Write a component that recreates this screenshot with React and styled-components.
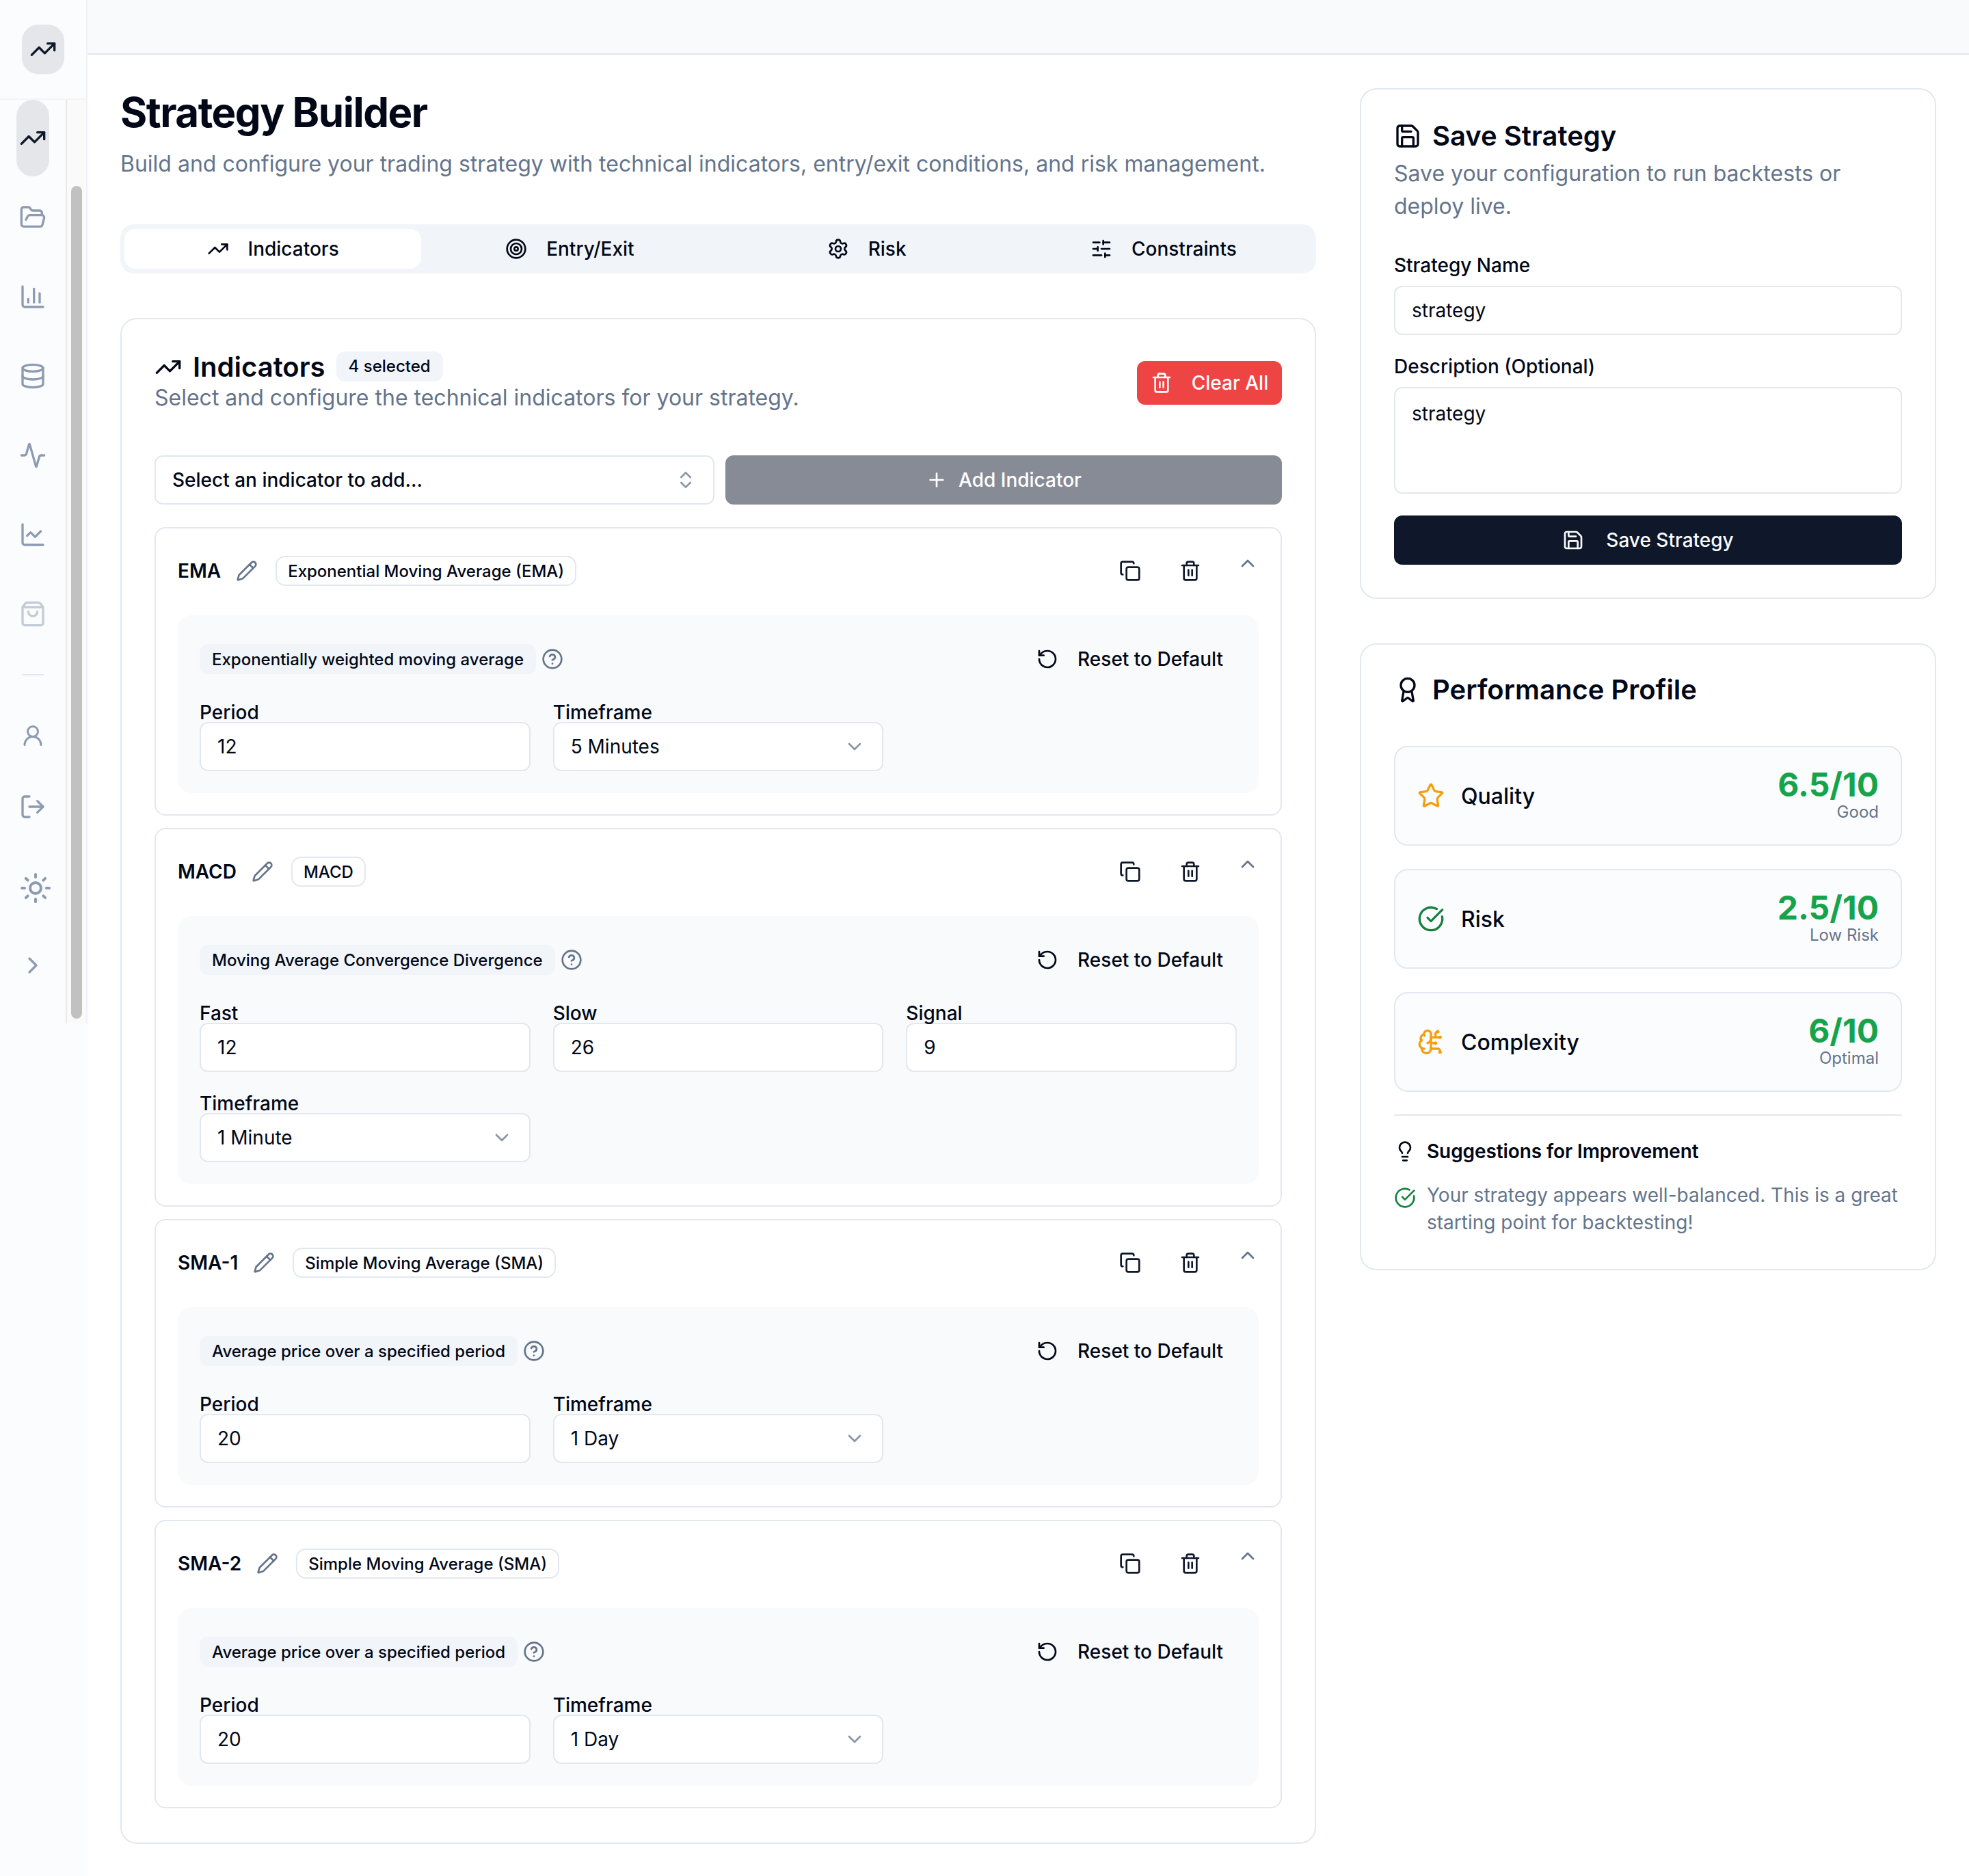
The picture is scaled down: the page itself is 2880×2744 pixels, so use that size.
import React from "react";
import styled, { createGlobalStyle } from "styled-components";
import {
  TrendingUp, FolderOpen, ChartColumn, Database, Activity, ChartLine, ShoppingBag, UserRound, LogOut, Sun, ChevronRight,
  Target, Settings, SlidersHorizontal, Trash2, ChevronsUpDown, Plus, Pencil, Copy, ChevronUp, RotateCcw,
  CircleHelp, ChevronDown, Save, Award, Star, CircleCheckBig, BrainCircuit, Lightbulb,
} from "lucide-react";

const Global = createGlobalStyle`
  * { box-sizing: border-box; }
  html, body { margin: 0; padding: 0; background: #fff; }
  body { font-family: Inter, "Noto Sans", sans-serif; color: #020817; }
  input, textarea, button { font-family: inherit; }
`;

const Page = styled.div`display: flex; width: 2880px; min-height: 2744px; background: #fff;`;
const SideColumn = styled.div`width: 128px; flex: none; background: #fbfcfe;`;
const Sidebar = styled.aside`height: 1497px; display: flex; flex-direction: column; border-right: 2px solid #eef2f7;`;
const Brand = styled.div`height: 146px; flex: none; border-bottom: 2px solid #f1f5f9; padding: 36px 0 0 32px;`;
const BrandMark = styled.div`width: 62px; height: 72px; border-radius: 24px; background: #e4e6e9; display: flex; align-items: center; justify-content: center; color: #0f172a; box-shadow: 0 1px 2px rgba(0,0,0,.04);`;
const NavScroll = styled.div`flex: 1; display: flex; min-height: 0;`;
const NavList = styled.nav`width: 96px; flex: none; display: flex; flex-direction: column; align-items: center;`;
const NavItem = styled.div`
  width: 48px; height: ${p => p.$h || 116}px; flex: none; display: flex; align-items: center; justify-content: center;
  border-radius: 24px; color: ${p => p.$active ? "#0f172a" : "#8c9bb0"};
  background: ${p => p.$active ? "#e4e6e9" : "transparent"};
  opacity: ${p => p.$dim ? .5 : 1};
  padding-left: ${p => p.$nudge || 0}px;
  margin-bottom: ${p => p.$active ? 2 : 0}px;
  svg { flex: none; }
`;
const NavRule = styled.div`width: 32px; height: 2px; background: #e2e8f0; margin: 30px 0 30px; flex: none;`;
const ScrollTrack = styled.div`flex: 1; background: #fafafa; border-left: 2px solid #e8e8e8; padding: 126px 6px 7px 6px; display: flex;`;
const ScrollThumb = styled.div`flex: 1; background: #c1c1c1; border-radius: 8px;`;

const Workspace = styled.div`flex: 1; min-width: 0; display: flex; flex-direction: column;`;
const TopBar = styled.header`height: 80px; flex: none; background: #f8fafc; border-bottom: 2px solid #e2e8f0;`;
const Content = styled.div`display: grid; grid-template-columns: 1749px 843px; gap: 64px; padding: 49px 48px 0;`;
const MainCol = styled.main`min-width: 0;`;
const Title = styled.h1`margin: 0; font-size: 60px; line-height: 70px; font-weight: 700; letter-spacing: -1.5px; color: #020817;`;
const Subtitle = styled.p`margin: 17px 0 0; font-size: 32px; line-height: 48px; color: #64748b;`;

const TabBar = styled.div`margin-top: 64px; height: 72px; background: #f1f5f9; border-radius: 20px; padding: 7px 6px; display: grid; grid-template-columns: repeat(4, 1fr);`;
const Tab = styled.div`
  display: flex; align-items: center; justify-content: center; gap: 28px; font-size: 28px; font-weight: 500; border-radius: 16px;
  background: ${p => p.$active ? "#fff" : "transparent"}; color: #020817;
`;

const Card = styled.section`border: 2px solid #e2e8f0; border-radius: 24px; background: #fff;`;
const IndicatorsCard = styled(Card)`margin-top: 65px; padding: 48px 48px 50px;`;
const CardHead = styled.div`display: flex; justify-content: space-between; align-items: center;`;
const HeadRow = styled.div`display: flex; align-items: center; height: 44px;`;
const HeadTitle = styled.h2`margin: 0 0 0 16px; font-size: 40px; font-weight: 600; line-height: 44px;`;
const CountBadge = styled.span`margin: -3px 0 0 16px; height: 44px; padding: 0 18px; display: inline-flex; align-items: center; background: #f1f5f9; border-radius: 12px; font-size: 24px; font-weight: 500;`;
const HeadSub = styled.p`margin: 0; font-size: 32px; line-height: 46px; color: #64748b;`;
const DangerButton = styled.button`height: 64px; width: 212px; border: 0; border-radius: 12px; background: #ef4444; color: #fff; font-size: 28px; font-weight: 500; display: flex; align-items: center; justify-content: center; gap: 28px; padding: 0;`;

const AddRow = styled.div`margin-top: 61px; display: grid; grid-template-columns: 819px 1fr; gap: 16px;`;
const SelectBox = styled.div`
  height: 72px; background: #fff; border: 2px solid #e2e8f0; border-radius: 12px; display: flex; align-items: center; justify-content: space-between;
  padding: 0 24px; font-size: 28px; color: #020817; font-weight: ${p => p.$w || 400};
  svg { color: #64748b; opacity: .75; flex: none; }
`;
const AddButton = styled.button`height: 72px; border: 0; border-radius: 12px; background: #878b95; color: #fff; font-size: 28px; font-weight: 500; display: flex; align-items: center; justify-content: center; gap: 16px; padding: 0;`;

const IndicatorList = styled.div`margin-top: 33px; display: flex; flex-direction: column; gap: 18px;`;
const IndicatorCard = styled.article`border: 2px solid #e2e8f0; border-radius: 16px; padding: 32px 32px 31px; background: #fff;`;
const IndicatorHead = styled.div`display: flex; align-items: flex-start; height: 60px;`;
const IndicatorInfo = styled.div`flex: 1; display: flex; align-items: center; height: 60px; min-width: 0;`;
const IndicatorName = styled.span`font-size: 28px; font-weight: 600;`;
const EditIcon = styled.span`display: flex; margin-left: 22px; color: #64748b;`;
const TypeBadge = styled.span`margin-left: 26px; height: 44px; padding: 0 16px; display: inline-flex; align-items: center; background: #fff; border: 2px solid #e2e8f0; border-radius: 14px; font-size: 24px; font-weight: 500;`;
const IconAction = styled.div`width: 72px; height: 60px; display: flex; align-items: center; justify-content: center; color: #0f172a; margin-left: 16px;`;
const Collapse = styled.div`width: 32px; height: 38px; display: flex; align-items: center; justify-content: center; color: #64748b; margin-left: 32px;`;

const Panel = styled.div`margin-top: 35px; background: #f8fafc; border-radius: 20px; padding: 32px;`;
const PanelTop = styled.div`display: flex; align-items: center; justify-content: space-between; height: 64px;`;
const HintWrap = styled.div`display: flex; align-items: center; gap: 8px; color: #64748b;`;
const HintChip = styled.span`height: 44px; padding: 0 18px; display: inline-flex; align-items: center; background: #f1f5f9; border-radius: 12px; font-size: 24px; font-weight: 500; color: #020817;`;
const ResetButton = styled.div`display: flex; align-items: center; gap: 28px; font-size: 28px; font-weight: 500; padding-right: 20px; color: #020817;`;
const FieldGrid = styled.div`margin-top: 32px; display: grid; grid-template-columns: repeat(3, 1fr); gap: 32px 33px;`;
const FieldLabel = styled.label`display: block; font-size: 28px; font-weight: 500; line-height: 28px;`;
const TextInput = styled.input`
  display: block; width: 100%; height: 72px; border: 2px solid #e2e8f0; border-radius: 12px; background: #fff; padding: 0 24px;
  font-size: 28px; color: #020817; outline: none;
`;

const SideCol = styled.aside`display: flex; flex-direction: column; gap: 65px;`;
const SaveCard = styled(Card)`padding: 48px;`;
const SideTitle = styled.h2`margin: 0; display: flex; align-items: center; gap: 16px; font-size: 40px; line-height: 40px; font-weight: 600;`;
const SideSub = styled.p`margin: 11px 0 0; font-size: 32px; line-height: 48px; color: #64748b;`;
const NameLabel = styled(FieldLabel)`margin-top: ${p => p.$mt}px; margin-bottom: 16px;`;
const DescArea = styled.textarea`
  display: block; width: 100%; height: 156px; resize: none; border: 2px solid #e2e8f0; border-radius: 12px; background: #fff; padding: 17px 24px;
  font-size: 28px; line-height: 40px; color: #020817; outline: none;
`;
const PrimaryButton = styled.button`margin-top: 32px; width: 100%; height: 72px; border: 0; border-radius: 12px; background: #0f172a; color: #f8fafc; font-size: 28px; font-weight: 500; display: flex; align-items: center; justify-content: center; gap: 32px; padding: 0;`;

const ProfileCard = styled(Card)`padding: 50px 48px 48px;`;
const ProfileTitle = styled(SideTitle)`height: 32px; margin-bottom: 66px;`;
const MetricList = styled.div`display: flex; flex-direction: column; gap: 34px;`;
const Metric = styled.div`height: 146px; border: 2px solid #e2e8f0; border-radius: 20px; background: #fbfcfe; padding: 0 32px; display: flex; align-items: center; justify-content: space-between;`;
const MetricName = styled.div`display: flex; align-items: center; gap: 24px; font-size: 32px; font-weight: 500; svg { color: ${p => p.$tone}; }`;
const MetricValue = styled.div`text-align: right;`;
const Score = styled.div`font-size: 48px; line-height: 48px; font-weight: 700; color: #16a34a;`;
const Verdict = styled.div`font-size: 24px; line-height: 32px; color: #64748b;`;
const Divider = styled.hr`border: 0; height: 2px; background: #e2e8f0; margin: 33px 0 0;`;
const SuggestHead = styled.div`margin-top: 36px; display: flex; align-items: center; gap: 16px; font-size: 28px; line-height: 28px; font-weight: 600; letter-spacing: -.1px;`;
const SuggestRow = styled.div`margin-top: 28px; display: flex; gap: 16px; font-size: 28px; line-height: 40px; color: #64748b; svg { color: #15803d; flex: none; margin-top: 8px; }`;

const indicators = [
  { name: "EMA", type: "Exponential Moving Average (EMA)", hint: "Exponentially weighted moving average",
    fields: [["Period", "12"], ["Timeframe", "5 Minutes", true]] },
  { name: "MACD", type: "MACD", hint: "Moving Average Convergence Divergence",
    fields: [["Fast", "12"], ["Slow", "26"], ["Signal", "9"], ["Timeframe", "1 Minute", true]] },
  { name: "SMA-1", type: "Simple Moving Average (SMA)", hint: "Average price over a specified period",
    fields: [["Period", "20"], ["Timeframe", "1 Day", true]] },
  { name: "SMA-2", type: "Simple Moving Average (SMA)", hint: "Average price over a specified period",
    fields: [["Period", "20"], ["Timeframe", "1 Day", true]] },
];

const tabs = [
  ["Indicators", TrendingUp, true],
  ["Entry/Exit", Target],
  ["Risk", Settings],
  ["Constraints", SlidersHorizontal],
];

const metrics = [
  ["Quality", Star, "#f59e0b", "6.5/10", "Good"],
  ["Risk", CircleCheckBig, "#15803d", "2.5/10", "Low Risk"],
  ["Complexity", BrainCircuit, "#f59e0b", "6/10", "Optimal"],
];

function Indicator({ item }) {
  return (
    <IndicatorCard>
      <IndicatorHead>
        <IndicatorInfo>
          <IndicatorName>{item.name}</IndicatorName>
          <EditIcon><Pencil size={32} /></EditIcon>
          <TypeBadge>{item.type}</TypeBadge>
        </IndicatorInfo>
        <IconAction><Copy size={32} /></IconAction>
        <IconAction><Trash2 size={32} /></IconAction>
        <Collapse><ChevronUp size={32} /></Collapse>
      </IndicatorHead>
      <Panel>
        <PanelTop>
          <HintWrap>
            <HintChip>{item.hint}</HintChip>
            <CircleHelp size={32} />
          </HintWrap>
          <ResetButton><RotateCcw size={32} />Reset to Default</ResetButton>
        </PanelTop>
        <FieldGrid>
          {item.fields.map(([label, value, isSelect]) => (
            <div key={label}>
              <FieldLabel>{label}</FieldLabel>
              {isSelect
                ? <SelectBox><span>{value}</span><ChevronDown size={32} /></SelectBox>
                : <TextInput readOnly value={value} />}
            </div>
          ))}
        </FieldGrid>
      </Panel>
    </IndicatorCard>
  );
}

export default function App() {
  return (
    <>
      <Global />
      <Page>
        <SideColumn>
          <Sidebar>
            <Brand><BrandMark><TrendingUp size={40} /></BrandMark></Brand>
            <NavScroll>
              <NavList>
                <NavItem $active $h={112}><TrendingUp size={40} /></NavItem>
                <NavItem><FolderOpen size={40} /></NavItem>
                <NavItem><ChartColumn size={40} /></NavItem>
                <NavItem><Database size={40} /></NavItem>
                <NavItem><Activity size={40} /></NavItem>
                <NavItem><ChartLine size={40} /></NavItem>
                <NavItem $dim><ShoppingBag size={40} /></NavItem>
                <NavRule />
                <NavItem><UserRound size={36} /></NavItem>
                <NavItem $h={92}><LogOut size={40} /></NavItem>
                <NavItem $h={146} $nudge={8}><Sun size={48} /></NavItem>
                <NavItem $h={80}><ChevronRight size={40} /></NavItem>
              </NavList>
              <ScrollTrack><ScrollThumb /></ScrollTrack>
            </NavScroll>
          </Sidebar>
        </SideColumn>
        <Workspace>
          <TopBar />
          <Content>
            <MainCol>
              <Title>Strategy Builder</Title>
              <Subtitle>Build and configure your trading strategy with technical indicators, entry/exit conditions, and risk management.</Subtitle>
              <TabBar>
                {tabs.map(([label, Icon, active]) => (
                  <Tab key={label} $active={active}><Icon size={32} />{label}</Tab>
                ))}
              </TabBar>
              <IndicatorsCard>
                <CardHead>
                  <div>
                    <HeadRow>
                      <TrendingUp size={40} />
                      <HeadTitle>Indicators</HeadTitle>
                      <CountBadge>4 selected</CountBadge>
                    </HeadRow>
                    <HeadSub>Select and configure the technical indicators for your strategy.</HeadSub>
                  </div>
                  <DangerButton><Trash2 size={32} />Clear All</DangerButton>
                </CardHead>
                <AddRow>
                  <SelectBox $w={500}><span>Select an indicator to add...</span><ChevronsUpDown size={32} /></SelectBox>
                  <AddButton><Plus size={32} />Add Indicator</AddButton>
                </AddRow>
                <IndicatorList>
                  {indicators.map(item => <Indicator key={item.name} item={item} />)}
                </IndicatorList>
              </IndicatorsCard>
            </MainCol>
            <SideCol>
              <SaveCard>
                <SideTitle><Save size={40} />Save Strategy</SideTitle>
                <SideSub>Save your configuration to run backtests or deploy live.</SideSub>
                <NameLabel $mt={48}>Strategy Name</NameLabel>
                <TextInput readOnly value="strategy" />
                <NameLabel $mt={32}>Description (Optional)</NameLabel>
                <DescArea readOnly value="strategy" />
                <PrimaryButton><Save size={32} />Save Strategy</PrimaryButton>
              </SaveCard>
              <ProfileCard>
                <ProfileTitle><Award size={40} />Performance Profile</ProfileTitle>
                <MetricList>
                  {metrics.map(([name, Icon, tone, score, verdict]) => (
                    <Metric key={name}>
                      <MetricName $tone={tone}><Icon size={40} />{name}</MetricName>
                      <MetricValue><Score>{score}</Score><Verdict>{verdict}</Verdict></MetricValue>
                    </Metric>
                  ))}
                </MetricList>
                <Divider />
                <SuggestHead><Lightbulb size={32} />Suggestions for Improvement</SuggestHead>
                <SuggestRow><CircleCheckBig size={32} /><span>Your strategy appears well-balanced. This is a great starting point for backtesting!</span></SuggestRow>
              </ProfileCard>
            </SideCol>
          </Content>
        </Workspace>
      </Page>
    </>
  );
}
